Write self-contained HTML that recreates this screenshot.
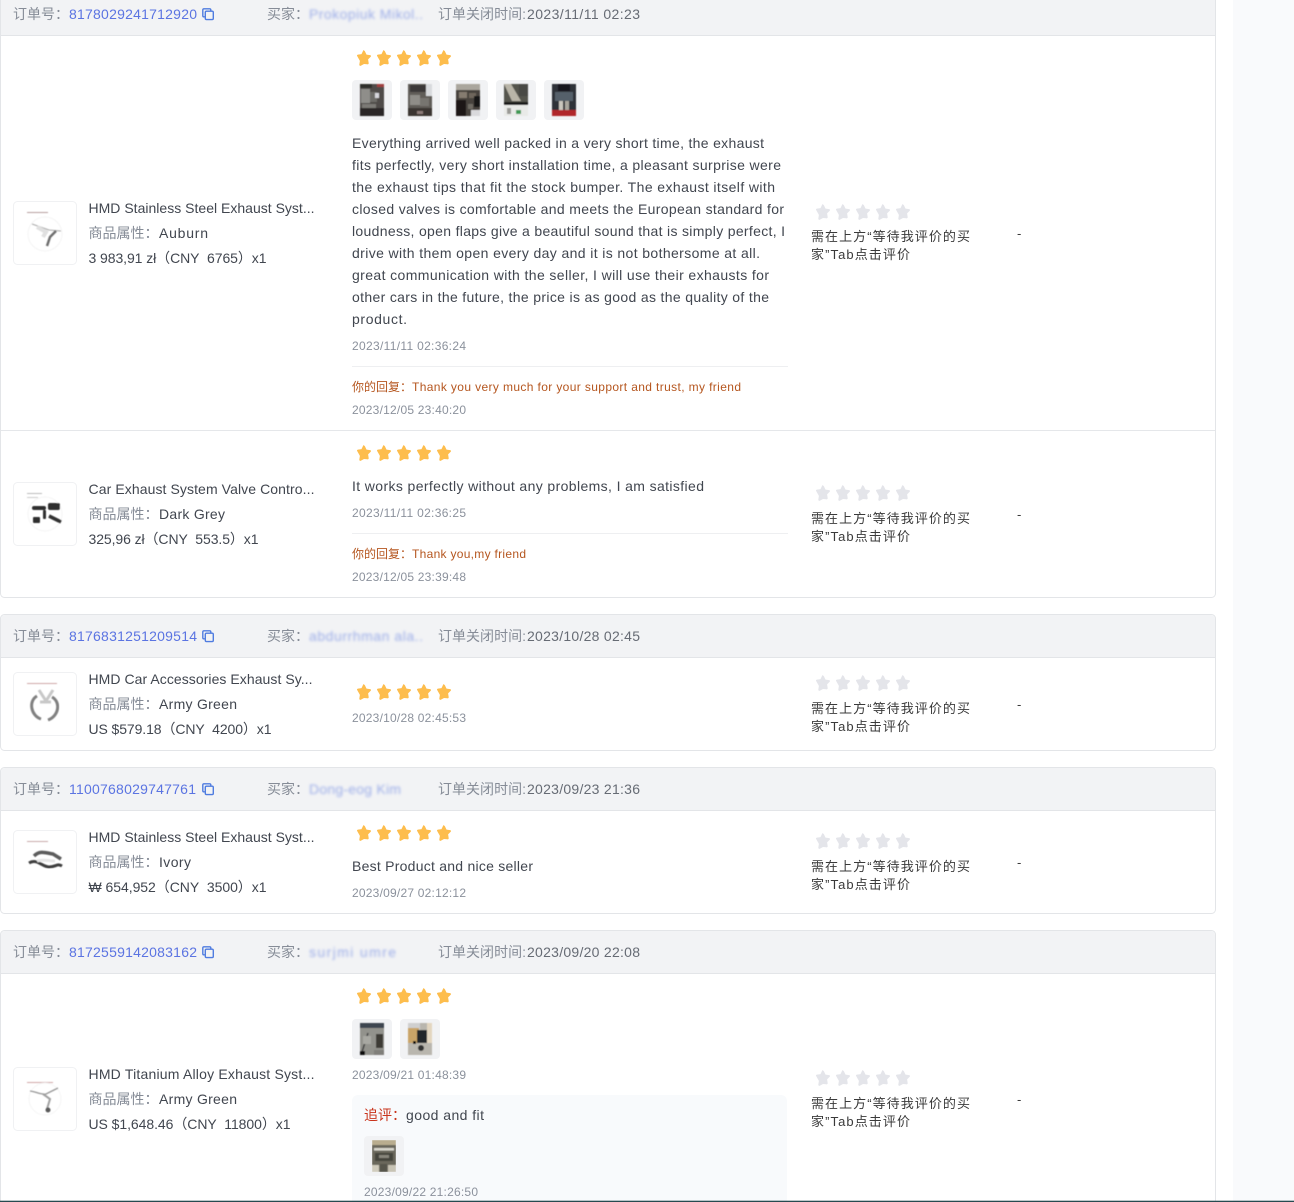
<!DOCTYPE html>
<html lang="zh">
<head>
<meta charset="utf-8">
<title>评价管理</title>
<style>
html,body{margin:0;padding:0;background:#fff;width:1294px;height:1202px;overflow:hidden}
svg{display:block}
text{font-family:"Liberation Sans","Noto Sans CJK SC",sans-serif;font-size:14px;fill:#41464f}
.g{fill:#868c97}
.b{fill:#5b74e2}
.v{fill:#666b74}
.d{font-size:12px;fill:#8b919c}
.r{font-size:12px;fill:#b5561f}
.n{fill:#9cade8;filter:url(#bl)}
.k{font-size:13px;fill:#3a3a3a}
.s{fill:#41464f}
</style>
</head>
<body>
<svg width="1294" height="1202" viewBox="0 0 1294 1202" xmlns="http://www.w3.org/2000/svg">
<defs>
<filter id="bl" x="-10%" y="-50%" width="120%" height="200%"><feGaussianBlur stdDeviation="1.300"/></filter>
<filter id="sb" x="-5%" y="-5%" width="110%" height="110%"><feGaussianBlur stdDeviation="0.650"/></filter>
<filter id="pb" x="-5%" y="-5%" width="110%" height="110%"><feGaussianBlur stdDeviation="0.500"/></filter>
<clipPath id="tc"><rect width="24" height="32"/></clipPath>
<path id="st" d="M7 .6c.4 0 .7.2.9.6l1.6 3.4 3.6.5c.9.1 1.2 1.1.6 1.7l-2.6 2.6.6 3.7c.1.9-.8 1.5-1.5 1.1L7 14l-3.2 1.7c-.7.4-1.6-.2-1.500-1.100l.6-3.700L.3 6.300c-.6-.6-.3-1.600.6-1.700l3.600-.5 1.600-3.400c.2-.4.5-.6.9-.6z"/>
<g id="gold" fill="#fdbd4d"><use href="#st" x="0"/><use href="#st" x="20"/><use href="#st" x="40"/><use href="#st" x="60"/><use href="#st" x="80"/></g>
<g id="gray" fill="#e4e5ea"><use href="#st" x="0"/><use href="#st" x="20"/><use href="#st" x="40"/><use href="#st" x="60"/><use href="#st" x="80"/></g>
<g id="cp" fill="none" stroke="#4f7ce0" stroke-width="1.4"><path d="M2.7 8.8H1.9C1.2 8.8.8 8.4.8 7.7V2C.8 1.300 1.200.8 1.900.8h5.800c.7 0 1.100.4 1.100 1.100v.9"/><rect x="3.300" y="3.200" width="8" height="8.400" rx="1.200"/></g>
<g id="box"><rect x=".5" y=".5" width="63" height="63" rx="4" fill="#fff" stroke="#f0f1f3"/></g>
<rect id="tb" width="40" height="40" rx="4" fill="#f1f2f4"/>
</defs>

<rect width="1294" height="1202" fill="#fff"/>
<rect x="1233" y="0" width="61" height="1202" fill="#f9fafc"/>

<!-- Card 1 -->
<rect x=".5" y="-10" width="1215" height="607.500" rx="4" fill="#fff" stroke="#e3e5e8"/>
<path d="M1 0H1215V35H1Z" fill="#f2f3f5"/>
<rect x="1" y="35" width="1214" height="1" fill="#e3e5e8"/>
<rect x="1" y="430" width="1214" height="1" fill="#e5e7ea"/>
<text class="g" x="13" y="19">订单号：</text><text class="b" x="69" y="19" textLength="128">8178029241712920</text>
<use href="#cp" x="202" y="8"/>
<text class="g" x="267" y="19">买家：</text><text class="n" x="309" y="19" textLength="114">Prokopiuk Mikol..</text>
<text class="g" x="438" y="19" textLength="88">订单关闭时间:</text><text class="v" x="527" y="19" textLength="113">2023/11/11 02:23</text>

<use href="#gold" x="357" y="50"/>
<use href="#tb" x="352" y="80"/><use href="#tb" x="400" y="80"/><use href="#tb" x="448" y="80"/><use href="#tb" x="496" y="80"/><use href="#tb" x="544" y="80"/>
<g filter="url(#sb)">
<g transform="translate(360 84)" clip-path="url(#tc)"><rect width="24" height="32" fill="#4f4c49"/><rect x="1" y="5" width="9" height="14" fill="#8f8e8a"/><rect x="10" y="8" width="7" height="10" fill="#6d6c68"/><rect x="15" y="9" width="4" height="5" fill="#d6d6dc"/><rect x="2" y="20" width="14" height="4" fill="#7c7a76"/><rect y="24" width="24" height="8" fill="#2a2828"/><rect x="17" width="7" height="3" fill="#a04040"/><rect y="0" width="12" height="4" fill="#2f2d2c"/></g>
<g transform="translate(408 84)" clip-path="url(#tc)"><rect width="24" height="32" fill="#605d59"/><rect x="18" width="6" height="12" fill="#d8dadd"/><rect x="2" y="1" width="16" height="7" fill="#3a3837"/><rect x="2" y="11" width="10" height="10" fill="#8f8d88"/><rect x="12" y="14" width="9" height="8" fill="#77746f"/><rect y="24" width="24" height="8" fill="#3a3433"/><rect x="9" y="27" width="6" height="3" fill="#8c7b78"/></g>
<g transform="translate(456 84)" clip-path="url(#tc)"><rect width="24" height="32" fill="#46423d"/><rect width="24" height="6" fill="#aaa69d"/><rect x="3" y="8" width="8" height="6" fill="#857c70"/><rect x="13" y="9" width="7" height="5" fill="#6e665c"/><rect y="16" width="10" height="16" fill="#1b1919"/><rect x="15" y="26" width="9" height="6" fill="#d9d9dc"/><rect x="18" y="12" width="6" height="11" fill="#121216"/><rect x="12" y="20" width="5" height="5" fill="#6e6a64"/></g>
<g transform="translate(504 84)" clip-path="url(#tc)"><rect width="24" height="32" fill="#55544e"/><path d="M0 0H7L17 17H8Z" fill="#b9b5a8"/><rect x="15" width="9" height="12" fill="#4a4944"/><rect y="21" width="24" height="11" fill="#e9eae8"/><rect y="18" width="24" height="3" fill="#1e1e1c"/><rect x="12" y="26" width="5" height="4" fill="#3f9a55"/><rect x="3" y="24" width="4" height="6" fill="#9a9a96"/></g>
<g transform="translate(552 84)" clip-path="url(#tc)"><rect width="24" height="32" fill="#2f3337"/><rect x="3" y="8" width="18" height="9" fill="#55606a"/><rect x="7" y="17" width="4" height="9" fill="#c9c6bd"/><rect x="13" y="17" width="4" height="9" fill="#a9a69d"/><rect y="26" width="24" height="6" fill="#b0282c"/><rect x="6" width="12" height="7" fill="#16181a"/></g>
</g>
<text x="352" y="148" textLength="412">Everything arrived well packed in a very short time, the exhaust</text>
<text x="352" y="170" textLength="429">fits perfectly, very short installation time, a pleasant surprise were</text>
<text x="352" y="192" textLength="423">the exhaust tips that fit the stock bumper. The exhaust itself with</text>
<text x="352" y="214" textLength="432">closed valves is comfortable and meets the European standard for</text>
<text x="352" y="236" textLength="433">loudness, open flaps give a beautiful sound that is simply perfect, I</text>
<text x="352" y="258" textLength="408">drive with them open every day and it is not bothersome at all.</text>
<text x="352" y="280" textLength="417">great communication with the seller, I will use their exhausts for</text>
<text x="352" y="302" textLength="417">other cars in the future, the price is as good as the quality of the</text>
<text x="352" y="324" textLength="55">product.</text>
<text class="d" x="352" y="350" textLength="114">2023/11/11 02:36:24</text>
<rect x="352" y="366" width="436" height="1" fill="#eeeff1"/>
<text class="r" x="352" y="391">你的回复：</text><text class="r" x="412" y="391" textLength="329">Thank you very much for your support and trust, my friend</text>
<text class="d" x="352" y="414" textLength="114">2023/12/05 23:40:20</text>

<!-- product 1 -->
<use href="#box" x="13" y="201"/>
<g transform="translate(13 201)" filter="url(#pb)"><rect x="14" y="11" width="21" height="1" fill="#b8a0a0"/><circle cx="32" cy="33" r="17" fill="none" stroke="#f4f4f4"/><path d="M19 23L36 29L48 30" stroke="#a8a8a8" stroke-width="1" fill="none"/><path d="M24 26L33 31L30 36" stroke="#e0e0e0" stroke-width="4" fill="none"/><path d="M43 30L37 36L34 45" stroke="#6e6e6e" stroke-width="2.500" fill="none"/></g>
<text x="88.500" y="213" textLength="226">HMD Stainless Steel Exhaust Syst...</text>
<text class="g" x="88.500" y="238">商品属性：</text><text class="s" x="159" y="238" textLength="49">Auburn</text>
<text x="88.500" y="263" textLength="178">3 983,91 zł（CNY&#160;&#160;6765）x1</text>
<use href="#gray" x="816" y="204"/>
<text class="k" x="811" y="241" textLength="159">需在上方“等待我评价的买</text>
<text class="k" x="811" y="259" textLength="99">家”Tab点击评价</text>
<text class="k" x="1017" y="238">-</text>

<!-- product 2 -->
<use href="#gold" x="357" y="445"/>
<text x="352" y="491" textLength="352">It works perfectly without any problems, I am satisfied</text>
<text class="d" x="352" y="517" textLength="114">2023/11/11 02:36:25</text>
<rect x="352" y="533" width="436" height="1" fill="#eeeff1"/>
<text class="r" x="352" y="558">你的回复：</text><text class="r" x="412" y="558" textLength="114">Thank you,my friend</text>
<text class="d" x="352" y="581" textLength="114">2023/12/05 23:39:48</text>
<use href="#box" x="13" y="482"/>
<g transform="translate(13 482)" filter="url(#pb)"><rect x="14" y="11" width="15" height="1" fill="#bbb"/><rect x="14" y="15" width="11" height="1" fill="#ccc"/><circle cx="32" cy="32" r="17" fill="none" stroke="#f4f4f4"/><g fill="#2e2e2e"><rect x="19" y="24" width="14" height="4" rx="2"/><rect x="35" y="21" width="12" height="7" rx="2"/><rect x="20" y="35" width="7" height="6" rx="1"/><rect x="30" y="28" width="3" height="9" rx="1"/></g><path d="M36 34L48 40" stroke="#333" stroke-width="3.500"/></g>
<text x="88.500" y="494" textLength="226">Car Exhaust System Valve Contro...</text>
<text class="g" x="88.500" y="519">商品属性：</text><text class="s" x="159" y="519" textLength="66">Dark Grey</text>
<text x="88.500" y="544" textLength="170">325,96 zł（CNY&#160;&#160;553.5）x1</text>
<use href="#gray" x="816" y="485"/>
<text class="k" x="811" y="523" textLength="159">需在上方“等待我评价的买</text>
<text class="k" x="811" y="541" textLength="99">家”Tab点击评价</text>
<text class="k" x="1017" y="519">-</text>

<!-- Card 2 -->
<rect x=".5" y="614.500" width="1215" height="136" rx="4" fill="#fff" stroke="#e3e5e8"/>
<path d="M1 619a4 4 0 0 1 4-4H1211a4 4 0 0 1 4 4V657H1Z" fill="#f2f3f5"/>
<rect x="1" y="657" width="1214" height="1" fill="#e3e5e8"/>
<text class="g" x="13" y="641">订单号：</text><text class="b" x="69" y="641" textLength="128">8176831251209514</text>
<use href="#cp" x="202" y="630"/>
<text class="g" x="267" y="641">买家：</text><text class="n" x="309" y="641" textLength="114">abdurrhman ala..</text>
<text class="g" x="438" y="641" textLength="88">订单关闭时间:</text><text class="v" x="527" y="641" textLength="113">2023/10/28 02:45</text>
<use href="#box" x="13" y="672"/>
<g transform="translate(13 672)" filter="url(#pb)"><rect x="14" y="11" width="30" height="1" fill="#cfa8a8"/><path d="M24 24C15 29 18 44 28 47M39 25C48 30 46 44 35 48" fill="none" stroke="#808080" stroke-width="3"/><path d="M26 18L33 29L40 18M27 30H38" fill="none" stroke="#c8c8c8" stroke-width="3"/></g>
<text x="88.500" y="684" textLength="224">HMD Car Accessories Exhaust Sy...</text>
<text class="g" x="88.500" y="709">商品属性：</text><text class="s" x="159" y="709" textLength="78">Army Green</text>
<text x="88.500" y="734" textLength="183">US $579.18（CNY&#160;&#160;4200）x1</text>
<use href="#gold" x="357" y="684"/>
<text class="d" x="352" y="722" textLength="114">2023/10/28 02:45:53</text>
<use href="#gray" x="816" y="675"/>
<text class="k" x="811" y="713" textLength="159">需在上方“等待我评价的买</text>
<text class="k" x="811" y="731" textLength="99">家”Tab点击评价</text>
<text class="k" x="1017" y="709">-</text>

<!-- Card 3 -->
<rect x=".5" y="767.500" width="1215" height="146" rx="4" fill="#fff" stroke="#e3e5e8"/>
<path d="M1 772a4 4 0 0 1 4-4H1211a4 4 0 0 1 4 4V810H1Z" fill="#f2f3f5"/>
<rect x="1" y="810" width="1214" height="1" fill="#e3e5e8"/>
<text class="g" x="13" y="794">订单号：</text><text class="b" x="69" y="794" textLength="127">1100768029747761</text>
<use href="#cp" x="202" y="783"/>
<text class="g" x="267" y="794">买家：</text><text class="n" x="309" y="794" textLength="92">Dong-eog Kim</text>
<text class="g" x="438" y="794" textLength="88">订单关闭时间:</text><text class="v" x="527" y="794" textLength="113">2023/09/23 21:36</text>
<use href="#box" x="13" y="830"/>
<g transform="translate(13 830)" filter="url(#pb)"><rect x="14" y="11" width="21" height="1" fill="#c8aaaa"/><path d="M16 33C24 28 29 37 36 37S44 33 49 36" fill="none" stroke="#3e3e3e" stroke-width="3"/><path d="M21 26C27 20 33 23 40 24L48 29" fill="none" stroke="#5c5c5c" stroke-width="3.500"/><path d="M24 31C30 29 36 31 42 31" fill="none" stroke="#e6e6e6" stroke-width="3"/></g>
<text x="88.500" y="842" textLength="226">HMD Stainless Steel Exhaust Syst...</text>
<text class="g" x="88.500" y="867">商品属性：</text><text class="s" x="159" y="867" textLength="32">Ivory</text>
<text x="88.500" y="892" textLength="178">₩ 654,952（CNY&#160;&#160;3500）x1</text>
<use href="#gold" x="357" y="825"/>
<text x="352" y="871" textLength="181">Best Product and nice seller</text>
<text class="d" x="352" y="897" textLength="114">2023/09/27 02:12:12</text>
<use href="#gray" x="816" y="833"/>
<text class="k" x="811" y="871" textLength="159">需在上方“等待我评价的买</text>
<text class="k" x="811" y="889" textLength="99">家”Tab点击评价</text>
<text class="k" x="1017" y="867">-</text>

<!-- Card 4 -->
<rect x=".5" y="930.500" width="1215" height="290" rx="4" fill="#fff" stroke="#e3e5e8"/>
<path d="M1 935a4 4 0 0 1 4-4H1211a4 4 0 0 1 4 4V973H1Z" fill="#f2f3f5"/>
<rect x="1" y="973" width="1214" height="1" fill="#e3e5e8"/>
<text class="g" x="13" y="957">订单号：</text><text class="b" x="69" y="957" textLength="128">8172559142083162</text>
<use href="#cp" x="202" y="946"/>
<text class="g" x="267" y="957">买家：</text><text class="n" x="309" y="957" textLength="87">surjmi umre</text>
<text class="g" x="438" y="957" textLength="88">订单关闭时间:</text><text class="v" x="527" y="957" textLength="113">2023/09/20 22:08</text>
<use href="#box" x="13" y="1067"/>
<g transform="translate(13 1067)" filter="url(#pb)"><rect x="14" y="15" width="26" height="1" fill="#d0a8a8"/><circle cx="32" cy="32" r="16" fill="none" stroke="#f5f5f5"/><path d="M17 24C24 25 28 28 33 27L45 21" fill="none" stroke="#969696" stroke-width="1.300"/><path d="M30 27L37 32L34 42" fill="none" stroke="#a0a0a0" stroke-width="2"/><circle cx="35" cy="43" r="2.500" fill="#5a5a5a"/></g>
<text x="88.500" y="1079" textLength="226">HMD Titanium Alloy Exhaust Syst...</text>
<text class="g" x="88.500" y="1104">商品属性：</text><text class="s" x="159" y="1104" textLength="78">Army Green</text>
<text x="88.500" y="1129" textLength="202">US $1,648.46（CNY&#160;&#160;11800）x1</text>
<use href="#gold" x="357" y="988"/>
<use href="#tb" x="352" y="1019"/><use href="#tb" x="400" y="1019"/>
<g filter="url(#sb)">
<g transform="translate(360 1023)" clip-path="url(#tc)"><rect width="24" height="32" fill="#92928c"/><rect width="24" height="5" fill="#3c4450"/><rect x="16" y="11" width="7" height="14" fill="#3c3a36"/><path d="M8 10L2 29" stroke="#444" stroke-width="1.500"/><rect x="3" y="13" width="8" height="8" fill="#a8a8a2"/><rect y="28" width="5" height="4" fill="#111"/><rect x="14" y="27" width="10" height="5" fill="#807f7a"/></g>
<g transform="translate(408 1023)" clip-path="url(#tc)"><rect width="24" height="32" fill="#b9b6ae"/><rect width="12" height="7" fill="#cfcfcf"/><rect y="5" width="11" height="15" fill="#c9a468"/><rect x="9" y="7" width="11" height="13" fill="#23262c"/><rect x="19" width="5" height="20" fill="#e3d6c0"/><circle cx="13" cy="25" r="3" fill="#333"/><rect x="5" y="18" width="3" height="3" fill="#111"/></g>
</g>
<text class="d" x="352" y="1079" textLength="114">2023/09/21 01:48:39</text>
<path d="M352 1202V1101a6 6 0 0 1 6-6H781a6 6 0 0 1 6 6V1202Z" fill="#f8fafc"/>
<text x="364" y="1120" style="fill:#c9341c">追评：</text><text x="406" y="1120" textLength="78">good and fit</text>
<use href="#tb" x="364" y="1136"/>
<g filter="url(#sb)" transform="translate(372 1140)" clip-path="url(#tc)"><rect width="24" height="32" fill="#6a675c"/><rect width="24" height="5" fill="#b9ad8f"/><rect x="2" y="8" width="20" height="2.500" fill="#d8d6ce"/><rect x="3" y="13" width="18" height="8" fill="#45443e"/><rect x="7" y="15" width="10" height="3" fill="#88867c"/><rect y="25" width="7" height="7" fill="#d0ccbd"/><rect x="16" y="25" width="8" height="7" fill="#c7c3b4"/><rect x="8" y="24" width="7" height="8" fill="#56544b"/></g>
<text class="d" x="364" y="1196" textLength="114">2023/09/22 21:26:50</text>
<use href="#gray" x="816" y="1070"/>
<text class="k" x="811" y="1108" textLength="159">需在上方“等待我评价的买</text>
<text class="k" x="811" y="1126" textLength="99">家”Tab点击评价</text>
<text class="k" x="1017" y="1104">-</text>

<rect x="0" y="1200.700" width="1294" height="1.300" fill="#264a50"/>
</svg>
</body>
</html>
